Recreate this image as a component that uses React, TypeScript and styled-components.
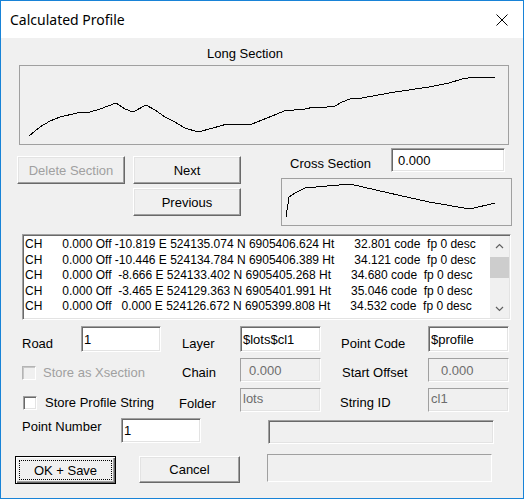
import styled, { createGlobalStyle } from "styled-components";

const GlobalStyle = createGlobalStyle`
  html, body {
    margin: 0;
    padding: 0;
    background: #f0f0f0;
  }
  body {
    font-family: "Liberation Sans", Arial, sans-serif;
    font-size: 13px;
    color: #000;
  }
`;

const Window = styled.div`
  box-sizing: border-box;
  width: 524px;
  height: 499px;
  border: 1px solid #1883d7;
  background: #f0f0f0;
  display: flex;
  flex-direction: column;
  overflow: hidden;
`;

const TitleBar = styled.div`
  flex-shrink: 0;
  height: 37px;
  background: #fff;
  display: flex;
  align-items: center;
  justify-content: space-between;
  padding: 0 15px 0 9px;
`;

const Title = styled.span`
  font-family: "Noto Sans", "Open Sans", sans-serif;
  font-size: 14px;
`;

const SectionLabel = styled.div`
  margin: 8px 0 0 206px;
  line-height: 15px;
`;

const ChartBox = styled.div<{ $w: number; $h: number; $top: number; $left?: number }>`
  box-sizing: border-box;
  width: ${(p) => p.$w}px;
  height: ${(p) => p.$h}px;
  margin-top: ${(p) => p.$top}px;
  margin-left: ${(p) => p.$left ?? 0}px;
  border: 1px solid #a0a0a0;

  svg {
    display: block;
  }
`;

const SectionRow = styled.div<{ $top: number }>`
  display: flex;
  align-items: flex-start;
  margin-top: ${(p) => p.$top}px;
`;

const ButtonColumn = styled.div<{ $left: number; $top: number }>`
  display: flex;
  flex-direction: column;
  gap: 4px;
  margin-left: ${(p) => p.$left}px;
  margin-top: ${(p) => p.$top}px;
`;

const Button = styled.button<{ $w: number; $h: number; $default?: boolean; $left?: number; $top?: number }>`
  box-sizing: border-box;
  width: ${(p) => p.$w}px;
  height: ${(p) => p.$h}px;
  margin: ${(p) => p.$top ?? 0}px 0 0 ${(p) => p.$left ?? 0}px;
  padding: 0;
  background: #f0f0f0;
  border: 1px solid;
  border-color: ${(p) => (p.$default ? "#000" : "#fff #696969 #696969 #fff")};
  box-shadow: ${(p) =>
    p.$default
      ? "inset 1px 1px 0 #fff, inset -1px -1px 0 #696969, inset -2px -2px 0 #a0a0a0"
      : "inset -1px -1px 0 #a0a0a0, inset 1px 1px 0 #e3e3e3"};
  outline: ${(p) => (p.$default ? "1px dotted #000" : "none")};
  outline-offset: -5px;
  font-family: "Liberation Sans", Arial, sans-serif;
  font-size: 13px;
  font-weight: 400;
  color: #000;

  &:disabled {
    color: #a0a0a0;
  }
`;

const CrossColumn = styled.div`
  display: flex;
  flex-direction: column;
  margin-left: 40px;
`;

const CrossHead = styled.div`
  display: flex;
  align-items: flex-start;
`;

const CrossLabel = styled.span`
  box-sizing: border-box;
  width: 110px;
  padding-left: 9px;
  margin-top: 8px;
  line-height: 15px;
`;

const Edit = styled.div<{ $w: number; $h: number; $disabled?: boolean; $indent?: number; $multi?: boolean }>`
  box-sizing: border-box;
  width: ${(p) => p.$w}px;
  height: ${(p) => p.$h}px;
  display: flex;
  align-items: ${(p) => (p.$multi ? "flex-start" : "center")};
  padding: ${(p) => (p.$multi ? "2px" : "0")} 0 0 ${(p) => p.$indent ?? 2}px;
  background: ${(p) => (p.$disabled ? "#f0f0f0" : "#fff")};
  border: 1px solid;
  border-color: #a0a0a0 #fff #fff #a0a0a0;
  box-shadow: ${(p) =>
    p.$disabled ? "inset -1px -1px 0 #e3e3e3" : "inset 1px 1px 0 #696969, inset -1px -1px 0 #e3e3e3"};
  color: ${(p) => (p.$disabled ? "#6d6d6d" : "#000")};
  line-height: 15px;
  white-space: nowrap;
  overflow: hidden;
`;

const ListBox = styled.div`
  box-sizing: border-box;
  width: 489px;
  height: 86px;
  margin: 8px 0 0 21px;
  padding: 1px;
  display: flex;
  background: #fff;
  border: 1px solid;
  border-color: #a0a0a0 #fff #fff #a0a0a0;
  box-shadow: inset 1px 1px 0 #696969, inset -1px -1px 0 #e3e3e3;
`;

const ListRows = styled.div`
  flex: 1;
  padding: 1px 0 0 1px;
  font-size: 12px;
  line-height: 15.5px;
  white-space: pre;
  overflow: hidden;
`;

const ScrollBar = styled.div`
  width: 19px;
  display: flex;
  flex-direction: column;
  background: #f0f0f0;
`;

const ScrollArrow = styled.div`
  height: 19px;
  display: flex;
  align-items: center;
  justify-content: center;
`;

const ScrollTrack = styled.div`
  flex: 1;
  padding-top: 2px;
`;

const ScrollThumb = styled.div`
  height: 21px;
  background: #cdcdcd;
`;

const FormGrid = styled.div`
  display: grid;
  grid-template-columns: 59px 80px 79px 81px 107px 81px;
  grid-template-rows: 26px 24px 24px;
  row-gap: 6px;
  margin: 6px 0 0 21px;
`;

const FieldLabel = styled.span<{ $top: number; $left?: number }>`
  padding-top: ${(p) => p.$top}px;
  padding-left: ${(p) => p.$left ?? 0}px;
  line-height: 15px;
  white-space: nowrap;
`;

const CheckRow = styled.label<{ $top: number; $left?: number; $gap: number; $disabled?: boolean }>`
  grid-column: 1 / span 2;
  display: flex;
  align-items: center;
  gap: ${(p) => p.$gap}px;
  height: 15px;
  margin-top: ${(p) => p.$top}px;
  padding-left: ${(p) => p.$left ?? 0}px;
  color: ${(p) => (p.$disabled ? "#a0a0a0" : "#000")};
  white-space: nowrap;
`;

const CheckBox = styled.span<{ $disabled?: boolean }>`
  box-sizing: border-box;
  width: 14px;
  height: 14px;
  flex-shrink: 0;
  border: 1px solid;
  border-color: ${(p) => (p.$disabled ? "#b4b4b4 #fff #fff #b4b4b4" : "#a0a0a0 #fff #fff #a0a0a0")};
  box-shadow: ${(p) =>
    p.$disabled ? "inset 1px 1px 0 #c8c8c8" : "inset 1px 1px 0 #696969, inset -1px -1px 0 #e3e3e3"};
  background: ${(p) => (p.$disabled ? "#f0f0f0" : "#fff")};
`;

const PlainLabel = styled.span<{ $w: number; $left: number; $top: number }>`
  width: ${(p) => p.$w}px;
  margin: ${(p) => p.$top}px 0 0 ${(p) => p.$left}px;
  line-height: 15px;
`;

const Panel = styled.div<{ $w: number; $h: number; $left: number; $top: number; $deep?: boolean }>`
  box-sizing: border-box;
  width: ${(p) => p.$w}px;
  height: ${(p) => p.$h}px;
  margin: ${(p) => p.$top}px 0 0 ${(p) => p.$left}px;
  border: 1px solid;
  border-color: #a0a0a0 #fff #fff #a0a0a0;
  box-shadow: ${(p) => (p.$deep ? "inset 1px 1px 0 #696969, inset -1px -1px 0 #e3e3e3" : "none")};
`;

const longPoints = [
  [9, 70], [20, 61], [30, 55], [40, 51], [57, 47], [70, 46], [80, 43], [96, 37], [105, 43],
  [113, 46], [126, 39], [135, 44], [145, 51], [153, 55], [165, 62], [178, 66], [193, 62],
  [207, 58], [232, 58], [242, 54], [257, 48], [264, 45], [285, 43], [294, 41], [300, 42],
  [315, 40], [322, 36], [330, 33], [342, 32], [375, 26], [409, 21], [429, 17], [442, 13],
  [455, 11], [475, 11],
];

const crossPoints = [
  [4, 38], [7, 18], [13, 14], [23, 9], [68, 5], [107, 14], [147, 23], [188, 30], [213, 24],
];

const rows = [
  "CH      0.000 Off -10.819 E 524135.074 N 6905406.624 Ht      32.801 code  fp 0 desc",
  "CH      0.000 Off -10.446 E 524134.784 N 6905406.389 Ht      34.121 code  fp 0 desc",
  "CH      0.000 Off  -8.666 E 524133.402 N 6905405.268 Ht      34.680 code  fp 0 desc",
  "CH      0.000 Off  -3.465 E 524129.363 N 6905401.991 Ht      35.046 code  fp 0 desc",
  "CH      0.000 Off   0.000 E 524126.672 N 6905399.808 Ht      34.532 code  fp 0 desc",
];

const Polyline = ({ points, w, h }: { points: number[][]; w: number; h: number }) => (
  <svg width={w} height={h} viewBox={`0 0 ${w} ${h}`}>
    <polyline
      points={points.map((p) => p.join(",")).join(" ")}
      fill="none"
      stroke="#000"
      strokeWidth={1}
      shapeRendering="crispEdges"
    />
  </svg>
);

const Chevron = ({ down }: { down?: boolean }) => (
  <svg width="9" height="6" viewBox="0 0 9 6">
    <polyline
      points={down ? "1,1 4.5,4.5 8,1" : "1,5 4.5,1.5 8,5"}
      fill="none"
      stroke="#606060"
      strokeWidth={1.2}
    />
  </svg>
);

const App = () => {
  return (
    <>
      <GlobalStyle />
      <Window>
        <TitleBar>
          <Title>Calculated Profile</Title>
          <svg width="12" height="12" viewBox="0 0 12 12">
            <path d="M0.5 0.5 L11.5 11.5 M11.5 0.5 L0.5 11.5" stroke="#000" strokeWidth={1} />
          </svg>
        </TitleBar>

        <SectionLabel>Long Section</SectionLabel>
        <ChartBox $w={490} $h={80} $top={4} $left={18}>
          <Polyline points={longPoints} w={488} h={78} />
        </ChartBox>

        <SectionRow $top={3}>
          <ButtonColumn $left={16} $top={8}>
            <Button $w={108} $h={28} disabled>
              Delete Section
            </Button>
          </ButtonColumn>
          <ButtonColumn $left={8} $top={8}>
            <Button $w={108} $h={28}>Next</Button>
            <Button $w={108} $h={28}>Previous</Button>
          </ButtonColumn>
          <CrossColumn>
            <CrossHead>
              <CrossLabel>Cross Section</CrossLabel>
              <Edit $w={114} $h={24} $indent={6}>
                0.000
              </Edit>
            </CrossHead>
            <ChartBox $w={231} $h={48} $top={6}>
              <Polyline points={crossPoints} w={229} h={46} />
            </ChartBox>
          </CrossColumn>
        </SectionRow>

        <ListBox>
          <ListRows>
            {rows.map((r) => (
              <div key={r}>{r}</div>
            ))}
          </ListRows>
          <ScrollBar>
            <ScrollArrow>
              <Chevron />
            </ScrollArrow>
            <ScrollTrack>
              <ScrollThumb />
            </ScrollTrack>
            <ScrollArrow>
              <Chevron down />
            </ScrollArrow>
          </ScrollBar>
        </ListBox>

        <FormGrid>
          <FieldLabel $top={10}>Road</FieldLabel>
          <Edit $w={80} $h={26}>1</Edit>
          <FieldLabel $top={10} $left={21}>Layer</FieldLabel>
          <Edit $w={81} $h={26}>$lots$cl1</Edit>
          <FieldLabel $top={10} $left={20}>Point Code</FieldLabel>
          <Edit $w={81} $h={26}>$profile</Edit>

          <CheckRow $top={7} $gap={7} $disabled>
            <CheckBox $disabled />
            Store as Xsection
          </CheckRow>
          <FieldLabel $top={7} $left={21}>Chain</FieldLabel>
          <Edit $w={81} $h={24} $disabled $indent={8}>
            0.000
          </Edit>
          <FieldLabel $top={7} $left={21}>Start Offset</FieldLabel>
          <Edit $w={81} $h={24} $disabled $indent={12}>
            0.000
          </Edit>

          <CheckRow $top={7} $left={1} $gap={8}>
            <CheckBox />
            Store Profile String
          </CheckRow>
          <FieldLabel $top={8} $left={18}>Folder</FieldLabel>
          <Edit $w={81} $h={24} $disabled $multi>
            lots
          </Edit>
          <FieldLabel $top={7} $left={19}>String ID</FieldLabel>
          <Edit $w={81} $h={24} $disabled $multi>
            cl1
          </Edit>
        </FormGrid>

        <SectionRow $top={6}>
          <PlainLabel $w={99} $left={21} $top={1}>
            Point Number
          </PlainLabel>
          <Edit $w={80} $h={25}>1</Edit>
          <Panel $w={226} $h={24} $left={67} $top={2} $deep />
        </SectionRow>

        <SectionRow $top={10}>
          <Button $w={101} $h={28} $left={14} $top={2} $default>
            OK + Save
          </Button>
          <Button $w={101} $h={27} $left={23} $top={2}>
            Cancel
          </Button>
          <Panel $w={225} $h={28} $left={27} $top={0} />
        </SectionRow>
      </Window>
    </>
  );
};

export default App;
